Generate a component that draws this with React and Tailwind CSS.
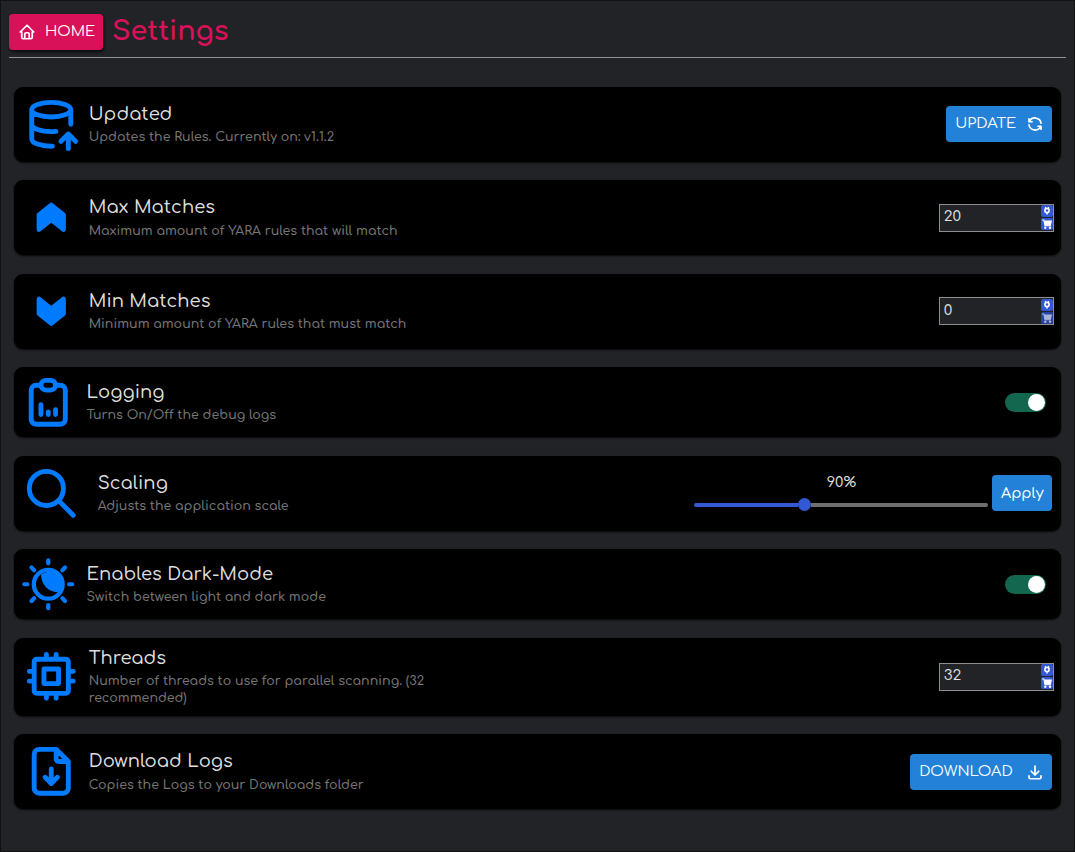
const F = "font-['Comfortaa','Quicksand',Lato,sans-serif]";

function Icon({ className = 'size-[58.5px]', w = 2, children }) {
  return (
    <svg viewBox="0 0 24 24" className={`${className} shrink-0`} fill="none" stroke="currentColor" strokeWidth={w} strokeLinecap="round" strokeLinejoin="round">
      {children}
    </svg>
  );
}

function Row({ icon, title, sub, className, textCls = 'ml-[8.5px]', children }) {
  return (
    <section className={`flex items-center rounded-[9px] bg-black shadow-[0_1px_2px_#08090a] ${className}`}>
      <div className="flex shrink-0 text-[#007bff]">{icon}</div>
      <div className={textCls}>
        <h2 className="whitespace-nowrap text-[18px] leading-[24px] font-medium tracking-[0.05px] text-[#dedede]">{title}</h2>
        <div className="mt-[3.5px] whitespace-nowrap text-[12.6px] leading-[17px] font-semibold tracking-[0.02px] text-[#757575]">{sub}</div>
      </div>
      <div className="ml-auto flex items-center">{children}</div>
    </section>
  );
}

function NumberBox({ value, dim }) {
  const ink = dim ? '#a9b3d6' : 'white';
  return (
    <div className="mr-[7px] flex h-[28px] w-[115px] items-center justify-between border border-[#8e8e91] bg-[#222326] pl-[3.5px] pr-0">
      <span className="-mt-px text-[15px] leading-[20px] text-[#e4e4e4]">{value}</span>
      <div className="flex flex-col gap-px">
        <svg viewBox="0 0 12 12" className="size-[12px]">
          <rect width="12" height="12" rx="2" fill="#3358d4" />
          <circle cx="6" cy="5.500" r="2.100" fill="none" stroke="white" strokeWidth="1.600" />
          <path d="M4.500 2v2M7.500 2v2M6 7.500v2.300" stroke="white" strokeWidth="1.200" />
        </svg>
        <svg viewBox="0 0 12 12" className="size-[12px]">
          <rect width="12" height="12" rx="2" fill={dim ? '#2743a0' : '#3358d4'} />
          <path d="M1 2h1.800l1.200 5.800h6" fill="none" stroke={ink} strokeWidth="1.100" />
          <path d="M3 2.500h8L9.800 7.500H4z" fill={ink} />
          <circle cx="4.300" cy="9.700" r="1.200" fill={ink} />
          <circle cx="9" cy="9.700" r="1.200" fill={ink} />
        </svg>
      </div>
    </div>
  );
}

function Toggle() {
  return (
    <div className="mr-[15px] flex h-[19px] w-[41px] items-center justify-end rounded-full bg-[#13674e] pr-px">
      <div className="size-[17px] rounded-full bg-white" />
    </div>
  );
}

export default function App() {
  return (
    <div className={`flex h-[852px] w-[1075px] flex-col border-[1px] border-[#111214] bg-[#222326] px-2 ${F}`}>
      <header className="flex h-[57px] shrink-0 items-start border-b border-[#919193] pt-[13px]">
        <button className="flex h-[36px] w-[94px] items-center rounded-[4px] bg-[#d81159] pl-[9px] text-white shadow-[1px_2px_3px_#0c0d0f]">
          <Icon className="size-[18px]" w={2.3}>
            <path d="M5 12H3l9-9 9 9h-2M5 12v7a2 2 0 0 0 2 2h10a2 2 0 0 0 2-2v-7M9 21v-6a2 2 0 0 1 2-2h2a2 2 0 0 1 2 2v6" />
          </Icon>
          <span className="ml-[9px] -mt-[2px] text-[14.6px] leading-[20px]">HOME</span>
        </button>
        <h1 className="-mt-px ml-[9px] text-[27px] leading-[36px] font-bold text-[#d81159]">Settings</h1>
      </header>
      <main className="mt-[28.5px] flex flex-col gap-[18.5px] px-[4.7px]">
        <Row className="h-[75px] pl-2" title="Updated" sub="Updates the Rules. Currently on: v1.1.2"
          icon={<Icon><path d="M4 6c0 1.657 3.582 3 8 3s8-1.343 8-3-3.582-3-8-3-8 1.343-8 3M4 6v6c0 1.657 3.582 3 8 3 .657 0 1.296-.030 1.907-.086M20 12V6M4 12v6c0 1.657 3.582 3 8 3 .157 0 .312-.002.466-.005M19 22v-6M22 19l-3-3-3 3" /></Icon>}>
          <button className="mr-[9px] flex h-[36px] w-[106px] items-center rounded-[4px] bg-[#2382d8] pl-[9px] pr-[8px] text-white">
            <span className="-mt-[2px] text-[14.7px] leading-[20px]">UPDATE</span>
            <Icon className="ml-auto size-[18px]" w={2.3}><path d="M20 11A8.1 8.1 0 0 0 4.500 9M4 5v4h4M4 13a8.1 8.1 0 0 0 15.500 2M20 19v-4h-4" /></Icon>
          </button>
        </Row>
        <Row className="h-[75px] pl-2" title="Max Matches" sub="Maximum amount of YARA rules that will match"
          icon={<Icon><path stroke="none" fill="currentColor" d="M11.375 6.22l-5 4a1 1 0 0 0-.375.78v6l.006.112a1 1 0 0 0 1.619.669L12 14.28l4.375 3.5A1 1 0 0 0 18 17v-6a1 1 0 0 0-.375-.78l-5-4a1 1 0 0 0-1.25 0z" /></Icon>}>
          <NumberBox value="20" />
        </Row>
        <Row className="h-[75px] pl-2" title="Min Matches" sub="Minimum amount of YARA rules that must match"
          icon={<Icon className="size-[58.5px] rotate-180"><path stroke="none" fill="currentColor" d="M11.375 6.22l-5 4a1 1 0 0 0-.375.78v6l.006.112a1 1 0 0 0 1.619.669L12 14.28l4.375 3.5A1 1 0 0 0 18 17v-6a1 1 0 0 0-.375-.78l-5-4a1 1 0 0 0-1.25 0z" /></Icon>}>
          <NumberBox value="0" dim />
        </Row>
        <Row className="h-[70px] pl-[5px]" textCls="ml-[9.3px]" title="Logging" sub="Turns On/Off the debug logs"
          icon={<Icon><path d="M9 5H7a2 2 0 0 0-2 2v12a2 2 0 0 0 2 2h10a2 2 0 0 0 2-2V7a2 2 0 0 0-2-2h-2M11 3h2a2 2 0 0 1 0 4h-2a2 2 0 0 1 0-4zM9 17v-4M12 17v-1M15 17v-2" /></Icon>}>
          <Toggle />
        </Row>
        <Row className="h-[75px] pl-2" textCls="ml-[17.5px]" title="Scaling" sub="Adjusts the application scale"
          icon={<Icon><path d="M3 10a7 7 0 1 0 14 0 7 7 0 1 0-14 0M21 21l-6-6" /></Icon>}>
          <div className="mr-[4px] -mt-[3px] flex w-[294px] flex-col items-center">
            <span className="text-[14.6px] leading-[20px] text-[#e4e4e4]">90%</span>
            <div className="mt-[6px] flex h-[13px] w-full items-center">
              <div className="h-[4px] w-[104px] rounded-l-full bg-[#3358d4]" />
              <div className="size-[13px] rounded-full bg-[#3358d4]" />
              <div className="h-[4px] flex-1 rounded-r-full bg-[#6f6f6f]" />
            </div>
          </div>
          <button className="mr-[9px] h-[36px] w-[60px] rounded-[4px] bg-[#2382d8] pb-[1px] text-[14.4px] leading-[20px] font-medium text-white">Apply</button>
        </Row>
        <Row className="h-[70px] pl-[5px]" textCls="ml-[9.3px]" title="Enables Dark-Mode" sub="Switch between light and dark mode"
          icon={<svg viewBox="-29 -29 58 58" className="size-[58.5px]" fill="none" stroke="currentColor" strokeWidth="4.200" strokeLinecap="round"><circle r="14.300" /><path stroke="none" fill="currentColor" d="M-7-10A17 17 0 0 0 10.500 8L14 4 13-8 3-14Z" /><path d="M0-20.700v-3M0 20.700v3M-20.700 0h-3M20.700 0h3M-14-14l-2.600-2.600M14-14l2.600-2.600M-14 14l-2.600 2.600M14 14l2.600 2.600" /></svg>}>
          <Toggle />
        </Row>
        <Row className="h-[78px] pl-2" title="Threads" sub={<>Number of threads to use for parallel scanning. (32<br />recommended)</>}
          icon={<Icon><path d="M6 5h12a1 1 0 0 1 1 1v12a1 1 0 0 1-1 1H6a1 1 0 0 1-1-1V6a1 1 0 0 1 1-1zM9 9h6v6H9zM3 10h2M3 14h2M10 3v2M14 3v2M21 10h-2M21 14h-2M14 21v-2M10 21v-2" /></Icon>}>
          <NumberBox value="32" />
        </Row>
        <Row className="h-[75px] pl-2" title="Download Logs" sub="Copies the Logs to your Downloads folder"
          icon={<Icon><path d="M14 3v4a1 1 0 0 0 1 1h4M17 21H7a2 2 0 0 1-2-2V5a2 2 0 0 1 2-2h7l5 5v11a2 2 0 0 1-2 2zM12 17v-6M9.500 14.500 12 17l2.500-2.500" /></Icon>}>
          <button className="mr-[9px] flex h-[36px] w-[142px] items-center rounded-[4px] bg-[#2382d8] pl-[9px] pr-[8px] text-white">
            <span className="-mt-[2px] text-[14.7px] leading-[20px]">DOWNLOAD</span>
            <Icon className="ml-auto size-[18px]" w={2.3}><path d="M4 17v2a2 2 0 0 0 2 2h12a2 2 0 0 0 2-2v-2M7 11l5 5 5-5M12 4v12" /></Icon>
          </button>
        </Row>
      </main>
    </div>
  );
}
